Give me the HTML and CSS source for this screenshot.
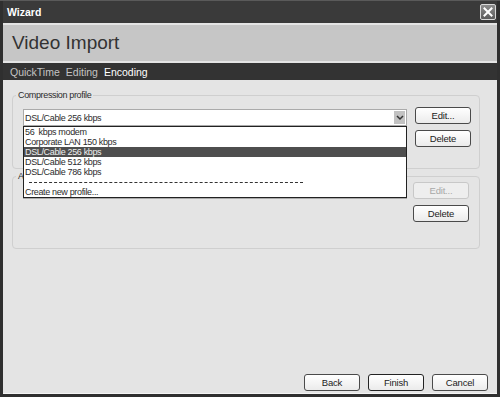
FILE: index.html
```html
<!DOCTYPE html>
<html lang="en">
<head>
  <meta charset="UTF-8">
  <title>Wizard</title>
  <link rel="stylesheet" href="styles.css">
</head>
<body>
  <div class="window">
    <div class="titlebar">
      <span class="title">Wizard</span>
      <span class="close">
        <svg width="14" height="14" viewBox="0 0 14 14">
          <path d="M3.5 3.5 L10.5 10.5 M10.5 3.5 L3.5 10.5" stroke="#fff" stroke-width="2" stroke-linecap="square"/>
        </svg>
      </span>
    </div>

    <div class="header">Video Import</div>

    <div class="nav">
      <span>QuickTime</span>
      <span>Editing</span>
      <span class="current">Encoding</span>
    </div>

    <div class="content">
      <fieldset class="group first">
        <legend>Compression profile</legend>
        <div class="row">
          <div class="select-wrap">
            <div class="select">
              <span>DSL/Cable 256 kbps</span>
              <span class="arrow">
                <svg width="8" height="6" viewBox="0 0 8 6"><path d="M1 1 L4 4 L7 1" fill="none" stroke="#333" stroke-width="1.5"/></svg>
              </span>
            </div>
            <!-- open dropdown list -->
            <div class="dropdown">
              <div class="item">56&nbsp; kbps modem</div>
              <div class="item">Corporate LAN 150 kbps</div>
              <div class="item selected">DSL/Cable 256 kbps</div>
              <div class="item">DSL/Cable 512 kbps</div>
              <div class="item">DSL/Cable 786 kbps</div>
              <div class="item sep"><div class="dashes"></div></div>
              <div class="item">Create new profile...</div>
            </div>
          </div>
          <div class="buttons">
            <button>Edit...</button>
            <button>Delete</button>
          </div>
        </div>
      </fieldset>

      <fieldset class="group second">
        <legend>Audio profile</legend>
        <div class="row">
          <div class="listbox">
            <span class="scroll"></span>
          </div>
          <div class="buttons">
            <button disabled>Edit...</button>
            <button>Delete</button>
          </div>
        </div>
      </fieldset>

      <div class="footer">
        <button>Back</button>
        <button class="default">Finish</button>
        <button>Cancel</button>
      </div>
    </div>
  </div>
</body>
</html>
```

FILE: styles.css
```css
body {
  margin: 0;
  font-family: "Liberation Sans", Arial, sans-serif;
  font-size: 9px;
  letter-spacing: -0.35px;
  color: #2c2c2c;
}
.window {
  width: 500px;
  height: 397px;
  box-sizing: border-box;
  background-color: #2f2f2f;
  border-top: 1px solid #5a5a5a;
  padding: 0 3px 3px 3px;
  display: flex;
  flex-direction: column;
}
.titlebar {
  height: 22px;
  display: flex;
  align-items: center;
  justify-content: space-between;
  padding: 0 1px 0 4px;
  background-color: #3a3a3a;
}
.title {
  font-weight: bold;
  font-size: 10.5px;
  letter-spacing: 0;
  color: #fff;
  margin-top: -1px;
}
.close {
  width: 14px;
  height: 14px;
  border: 1px solid #d8d8d8;
  border-radius: 2px;
  background: linear-gradient(#8c8c8c, #5c5c5c);
  display: flex;
}
.header {
  height: 36px;
  background-color: #c6c6c6;
  border-top: 2px solid #e4e4e4;
  border-bottom: 2px solid #e4e4e4;
  padding-left: 9px;
  font-size: 19px;
  letter-spacing: 0;
  line-height: 36px;
  color: #333;
}
.nav {
  height: 17px;
  background-color: #333;
  padding-left: 7px;
  display: flex;
  gap: 6px;
  align-items: center;
  font-size: 10.5px;
  letter-spacing: 0;
  color: #c4c4c4;
}
.nav .current {
  color: #fff;
}
.content {
  flex: 1;
  background-color: #e4e4e4;
  border-bottom: 1px solid #f4f4f4;
  display: flex;
  flex-direction: column;
  padding: 9px 17px 2px 9px;
}
.group {
  margin: 0;
  border: 1px solid #cfcfcf;
  border-radius: 4px;
  padding: 0 8px 0 10px;
}
.group legend {
  padding: 0 2px;
  margin-left: -7px;
  line-height: 12px;
}
.group.first {
  height: 78px;
}
.group.second {
  margin-top: 1px;
  height: 77px;
  padding-right: 10px;
}
.row {
  display: flex;
  gap: 8px;
}
.first .row {
  margin-top: 6px;
}
.second .row {
  margin-top: 0;
  gap: 6px;
}
.select-wrap {
  position: relative;
  width: 384px;
  margin-top: 2px;
}
.select {
  height: 15px;
  background-color: #fff;
  border: 1px solid #aaa;
  display: flex;
  justify-content: space-between;
  align-items: center;
  padding-left: 1px;
}
.arrow {
  width: 11px;
  height: 13px;
  margin-right: 1px;
  background-color: #c2c2c2;
  display: flex;
  align-items: center;
  justify-content: center;
}
.dropdown {
  position: absolute;
  top: 17px;
  left: 0;
  width: 382px;
  background-color: #fff;
  border: 1px solid #222;
  z-index: 2;
}
.item {
  height: 10px;
  line-height: 10px;
  padding-left: 1px;
  white-space: nowrap;
}
.item.selected {
  background-color: #4e4e4e;
  color: #eee;
}
.item.sep {
  display: flex;
  align-items: center;
}
.dashes {
  width: 274px;
  margin-left: 4px;
  border-top: 1px dashed #333;
}
.buttons {
  display: flex;
  flex-direction: column;
  gap: 6px;
}
button {
  width: 56px;
  height: 17px;
  padding: 0;
  font-family: inherit;
  font-size: 9.5px;
  letter-spacing: -0.2px;
  color: #222;
  background: linear-gradient(#fff, #ebebeb);
  border: 1px solid #4a4a4a;
  border-radius: 3px;
}
button:disabled {
  color: #a8a8a8;
  border-color: #c8c8c8;
  background: #eee;
}
.listbox {
  width: 382px;
  height: 12px;
  margin-top: 3px;
  background-color: #fff;
  border: 1px solid #aaa;
  display: flex;
  justify-content: flex-end;
}
.scroll {
  width: 12px;
  background-color: #c6c6c6;
}
.footer {
  margin-top: auto;
  display: flex;
  justify-content: flex-end;
  gap: 8px;
  margin-right: -8px;
}
.footer .default {
  border-color: #222;
}
```
